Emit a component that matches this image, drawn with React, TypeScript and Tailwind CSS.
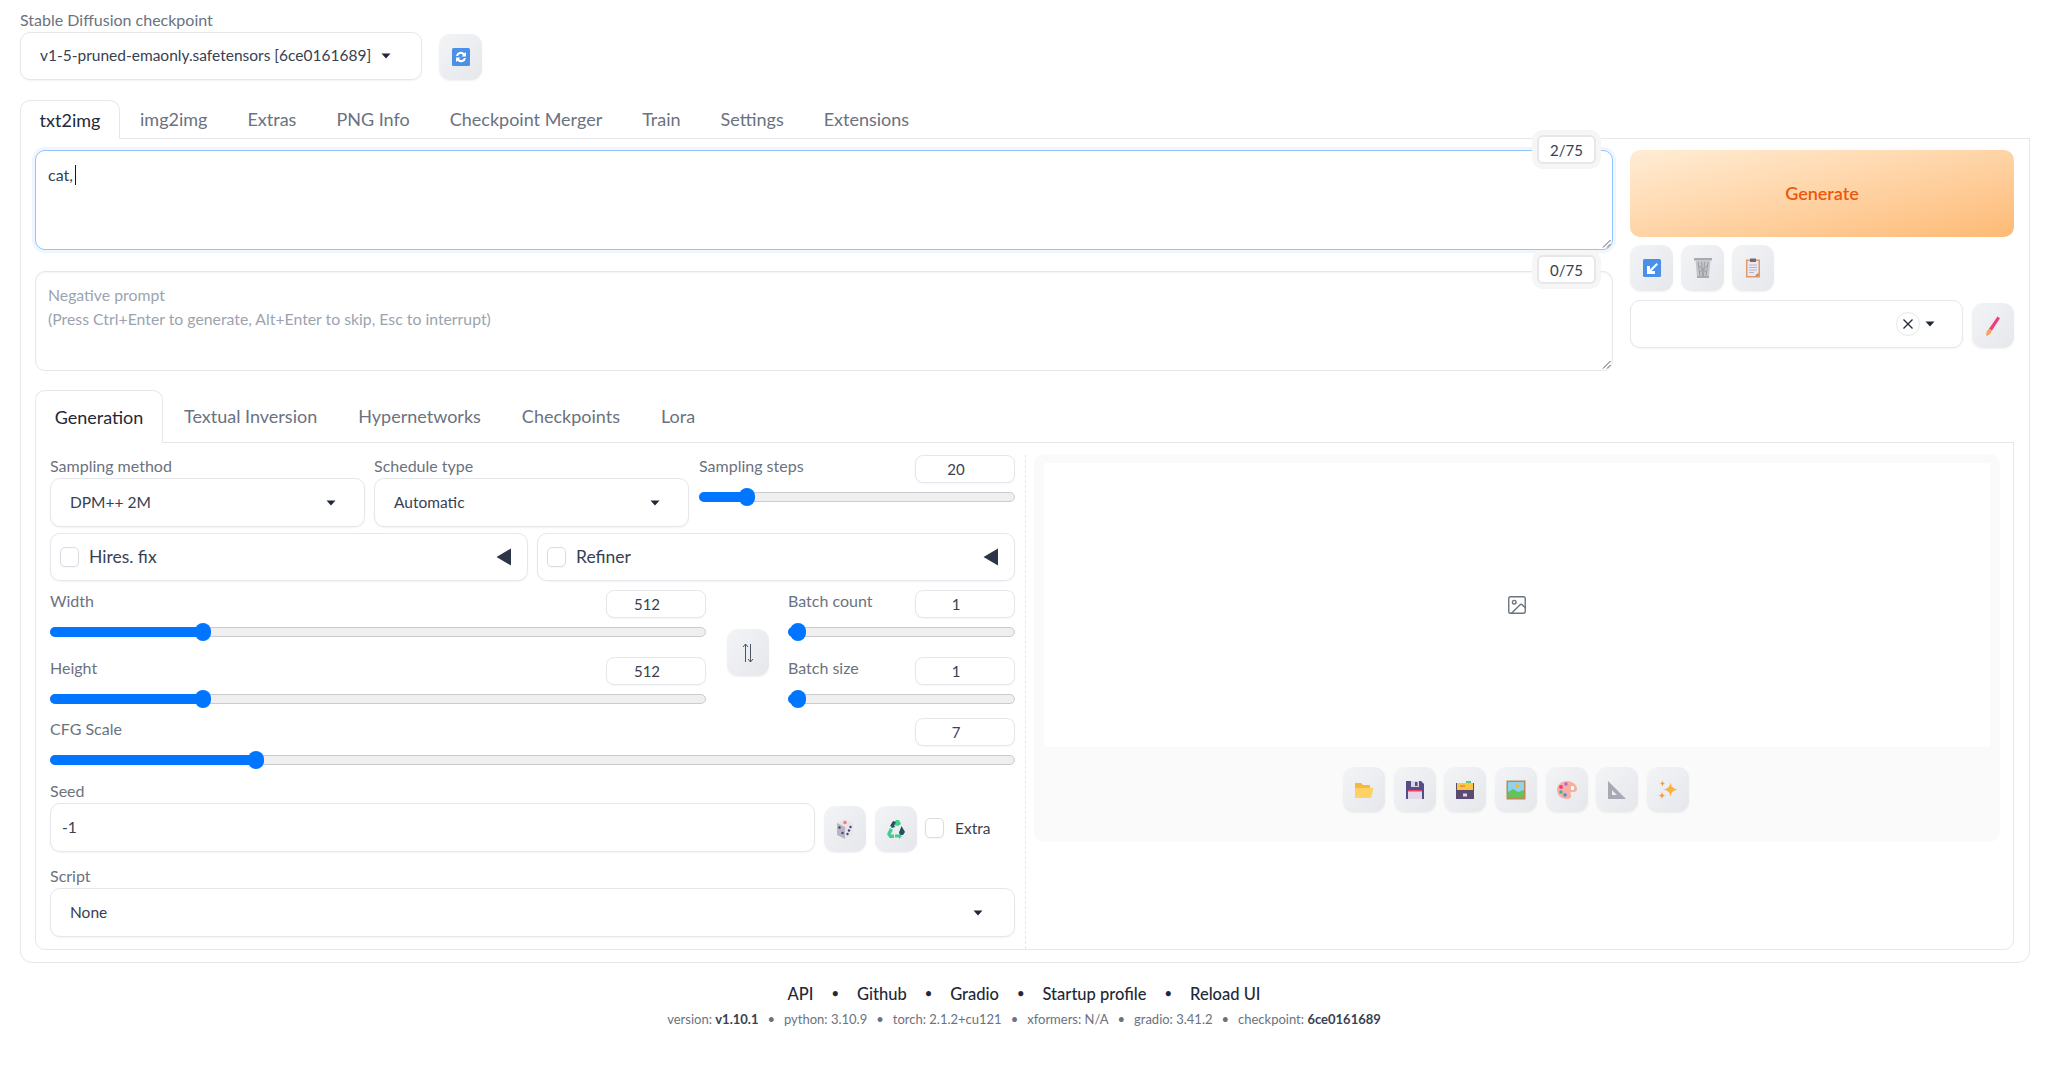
import React from "react";

const FONT = "font-['Lato','Noto_Sans',sans-serif]";

function Caret({ className = "" }: { className?: string }) {
  return (
    <svg width="10" height="6" viewBox="0 0 10 6" className={className}>
      <path d="M0.5 0.5h9L5 5.5z" fill="#1f2937" />
    </svg>
  );
}

function Field({ text, className }: { text: string; className: string }) {
  return (
    <div className={`flex items-center justify-between rounded-[10px] border border-[#e5e7eb] bg-white pl-[19px] shadow-[0_1px_2px_rgba(0,0,0,0.05)] text-[#374151] text-[15.5px] ${className}`}>
      <span>{text}</span>
    </div>
  );
}

function IconBtn({ children, className = "" }: { children: React.ReactNode; className?: string }) {
  return (
    <div className={`flex items-center justify-center rounded-[11px] bg-gradient-to-br from-[#f3f4f6] to-[#e5e7eb] shadow-[0_1px_2px_rgba(0,0,0,0.06)] shrink-0 ${className}`}>
      {children}
    </div>
  );
}

function Num({ value }: { value: string }) {
  return (
    <div className="flex h-[28px] w-[100px] items-center justify-center rounded-[8px] border border-[#e5e7eb] bg-white pr-[18px] text-[15px] text-[#374151] shadow-[0_1px_2px_rgba(0,0,0,0.04)]">
      {value}
    </div>
  );
}

function Slider({ pct }: { pct: number }) {
  return (
    <div className="relative h-[10px] w-full rounded-[5px] border border-[#c9ccd1] bg-[#efefef]">
      <div className="absolute -left-px -top-px h-[10px] rounded-l-[5px] bg-[#0075ff]" style={{ width: `${pct}%` }} />
      <div className="absolute top-[-5px] h-[18px] w-[16px] -translate-x-1/2 rounded-full bg-[#0075ff]" style={{ left: `${pct}%` }} />
    </div>
  );
}

function SliderBlock({ label, value, pct }: { label: string; value: string; pct: number }) {
  return (
    <div className="w-full">
      <div className="flex h-[28px] items-center justify-between">
        <span className="-translate-y-[3px] text-[16px] text-[#6b7280]">{label}</span>
        <Num value={value} />
      </div>
      <div className="mt-[9px]">
        <Slider pct={pct} />
      </div>
    </div>
  );
}

function Check() {
  return <div className="h-[20px] w-[19px] shrink-0 rounded-[5px] border border-[#d9dde3] bg-white shadow-[0_1px_2px_rgba(0,0,0,0.04)]" />;
}

function Accordion({ label }: { label: string }) {
  return (
    <div className="flex h-[48px] flex-1 items-center rounded-[10px] border border-[#e5e7eb] bg-white pl-[9px] pr-[15px] shadow-[0_1px_2px_rgba(0,0,0,0.05)]">
      <Check />
      <span className="ml-[10px] text-[17.5px] text-[#374151]">{label}</span>
      <svg width="16" height="18" viewBox="0 0 16 18" className="ml-auto">
        <path d="M15 0.5v17L0.5 9z" fill="#2c3648" />
      </svg>
    </div>
  );
}

function Resize() {
  return (
    <svg width="9" height="9" viewBox="0 0 9 9" className="absolute bottom-[1px] right-[1px]">
      <path d="M8.5 1L1 8.5M8.5 5L5 8.5" stroke="#555" strokeWidth="1" />
    </svg>
  );
}

function Counter({ text, className }: { text: string; className: string }) {
  return (
    <div className={`absolute right-[16px] flex h-[29px] w-[59px] items-center justify-center rounded-[6px] border-2 border-[#e5e7eb] bg-white text-[15px] text-[#374151] shadow-[0_0_0_5px_#f6f6f7] ${className}`}>
      {text}
    </div>
  );
}

const IRefresh = (
  <svg width="20" height="20" viewBox="0 0 20 20">
    <rect x="1" y="1" width="18" height="18" rx="1.5" fill="#4a90e8" />
    <path d="M5 9a5 5 0 0 1 8.500-2.800L15 5v4.500h-4.500l1.500-1.600A3 3 0 0 0 7 9zM15 11a5 5 0 0 1-8.500 2.800L5 15v-4.500h4.500L8 12.100A3 3 0 0 0 13 11z" fill="#fff" />
  </svg>
);
const IArrow = (
  <svg width="20" height="20" viewBox="0 0 20 20">
    <rect x="1" y="1" width="18" height="18" rx="1.5" fill="#4a90e8" />
    <path d="M14.500 5L8 11.500V8H5v8h8v-3H9.500L16 6.500z" fill="#fff" />
  </svg>
);
const ITrash = (
  <svg width="20" height="22" viewBox="0 0 20 22">
    <rect x="1" y="1" width="18" height="2.500" fill="#a9a9b2" />
    <path d="M2.500 3.500h15l-1.500 17H4z" fill="#c6c6cc" />
    <path d="M5 5l2 14M8.500 5l1 14M11.500 5l-1 14M15 5l-2 14M5 8l9 8M15 8l-9 8" stroke="#97979f" strokeWidth="0.900" />
    <rect x="4" y="19" width="12" height="2" fill="#a9a9b2" />
  </svg>
);
const IClip = (
  <svg width="16" height="20" viewBox="0 0 16 20">
    <rect x="1" y="1.500" width="14" height="18" fill="#dd9a6a" />
    <rect x="2.500" y="3" width="11" height="15" fill="#ece9f3" />
    <rect x="5" y="0.500" width="6" height="3.500" fill="#6f6a7a" />
    <path d="M4 7h8M4 9.500h8M4 12h8M4 14.500h5" stroke="#b6b3c6" strokeWidth="1" />
    <path d="M10 18l3.500-3.500V18z" fill="#c9803f" />
  </svg>
);
const IPencil = (
  <svg width="18" height="22" viewBox="0 0 18 22">
    <path d="M13.500 1.500L16 3.200L8 15.500L5 13.700z" fill="#ef3f78" />
    <path d="M5 13.700L8 15.500L6.500 18.500L3 21L2 20L3 16z" fill="#f3a35a" />
  </svg>
);
const ISwap = (
  <svg width="12" height="20" viewBox="0 0 12 20" fill="none" stroke="#4b5563" strokeWidth="1">
    <path d="M3.500 19V1M1 4l2.500-3L6 4M8.500 1v18M6 16l2.500 3L11 16" />
  </svg>
);
const IDice = (
  <svg width="20" height="22" viewBox="0 0 20 22">
    <path d="M10 1l8 4-8 4-8-4z" fill="#eee2e4" />
    <path d="M2 5l8 4v12l-8-4z" fill="#b9b6c4" />
    <path d="M18 5l-8 4v12l8-4z" fill="#e6e5ec" />
    <circle cx="10" cy="4.500" r="1.700" fill="#f0777f" />
    <circle cx="4.500" cy="9.500" r="1.200" fill="#45407a" />
    <circle cx="7.500" cy="15" r="1.200" fill="#45407a" />
    <circle cx="15.500" cy="9" r="1.200" fill="#45407a" />
    <circle cx="14" cy="12.500" r="1.200" fill="#45407a" />
    <circle cx="12.500" cy="16" r="1.200" fill="#45407a" />
  </svg>
);
const IRecycle = (
  <svg width="20" height="20" viewBox="0 0 20 20">
    <path d="M7 6l3-5h3l2 4-3 2z" fill="#3fd08f" />
    <path d="M7 6l2.500 2L5 9z" fill="#27505a" />
    <path d="M15.500 7l3.500 6-2 3h-3.500l-.5-2.500z" fill="#27505a" />
    <path d="M4 9l3 2-2.500 4.500H8V19H3.500L1 15z" fill="#3fd08f" />
    <path d="M9 15.500h4V14l3 3-3 3v-1.500H9z" fill="#3fd08f" />
    <path d="M7 2L4 7l3 1.500L10 3z" fill="#27505a" />
  </svg>
);
const IFolder = (
  <svg width="20" height="18" viewBox="0 0 20 18">
    <path d="M1 2h6l2 2h7v3H1z" fill="#f5b93f" />
    <path d="M1 17V7h18.500L17 17z" fill="#fed165" />
  </svg>
);
const ISave = (
  <svg width="20" height="20" viewBox="0 0 20 20">
    <path d="M1 1h15l3 3v15H1z" fill="#544d86" />
    <rect x="6" y="1" width="8" height="6" fill="#d8d2e6" />
    <rect x="10" y="2" width="2.500" height="4" fill="#544d86" />
    <rect x="3" y="10" width="14" height="9" fill="#e2d8ea" />
    <rect x="3" y="10" width="14" height="1.500" fill="#ee3f66" />
  </svg>
);
const IArchive = (
  <svg width="20" height="20" viewBox="0 0 20 20">
    <rect x="1" y="3" width="18" height="16" fill="#5b4a72" />
    <rect x="2" y="3" width="16" height="7" fill="#f9c83f" />
    <rect x="11" y="1" width="5" height="2" fill="#58c68f" />
    <rect x="5" y="5.500" width="5" height="1" fill="#e85c50" />
    <rect x="8" y="13.500" width="4" height="3" fill="#dcd7e6" />
  </svg>
);
const IPicture = (
  <svg width="20" height="20" viewBox="0 0 20 20">
    <rect x="0.500" y="0.500" width="19" height="19" fill="#b98a55" />
    <rect x="2" y="2" width="16" height="16" fill="#8fd3ee" />
    <circle cx="11" cy="6" r="2" fill="#f6b93b" />
    <path d="M2 12l5-3 5 3 6-2v8H2z" fill="#63c25b" />
  </svg>
);
const IPalette = (
  <svg width="22" height="20" viewBox="0 0 22 20">
    <path d="M11 1c6 0 10 4 10 8 0 3-3 3-5 3-2 0-2 2-1 3 1 2-1 4-4 4C5 19 1 15 1 10S5 1 11 1z" fill="#f6b0a0" />
    <rect x="15" y="6" width="3" height="4" rx="1" fill="#fff" />
    <circle cx="10" cy="4" r="1.700" fill="#b45ee0" />
    <circle cx="5" cy="7" r="1.900" fill="#ee3f7a" />
    <circle cx="5" cy="12" r="1.700" fill="#31b5a5" />
    <circle cx="9" cy="15" r="1.800" fill="#3f8fe8" />
  </svg>
);
const IRuler = (
  <svg width="20" height="20" viewBox="0 0 20 20">
    <path fillRule="evenodd" d="M1 1l18 18H1zM5 10v5h5z" fill="#a9a8b4" />
  </svg>
);
const ISpark = (
  <svg width="20" height="20" viewBox="0 0 20 20">
    <path d="M12.500 2c.7 4.800 2 6.300 7 7.500-5 1.200-6.300 2.700-7 7.500-.7-4.800-2-6.300-7-7.500 5-1.200 6.300-2.700 7-7.500z" fill="#fbb13c" />
    <path d="M4.500 0.500c.4 2.100.9 2.700 3 3.100-2.100.4-2.600 1-3 3.100-.4-2.100-.9-2.700-3-3.100 2.100-.4 2.600-1 3-3.100z" fill="#f59a3d" />
    <path d="M4 12c.5 2.500 1.100 3.100 3.500 3.500C5.100 16 4.500 16.600 4 19.200c-.5-2.600-1.100-3.200-3.500-3.700C2.900 15.100 3.500 14.500 4 12z" fill="#f59a3d" />
  </svg>
);

export default function App() {
  return (
    <div className={`h-[1066px] w-[2048px] overflow-hidden bg-white pl-[20px] pr-[18px] pt-[8px] text-[#374151] ${FONT}`}>
      {/* checkpoint */}
      <div className="h-[24px] text-[16px] leading-[24px] text-[#6b7280]">Stable Diffusion checkpoint</div>
      <div className="flex items-end gap-[17px]">
        <div className="flex h-[48px] w-[402px] items-center rounded-[10px] border border-[#e5e7eb] bg-white pl-[19px] text-[15.5px] shadow-[0_1px_2px_rgba(0,0,0,0.05)]">
          <span>v1-5-pruned-emaonly.safetensors [6ce0161689]</span>
          <Caret className="ml-[10px]" />
        </div>
        <IconBtn className="h-[46px] w-[43px]">{IRefresh}</IconBtn>
      </div>

      {/* top tabs */}
      <div className="mt-[20px] flex h-[39px] text-[18px] text-[#6b7280]">
        <div className="z-10 flex h-[39px] w-[100px] items-center justify-center rounded-t-[10px] border border-b-0 border-[#e5e7eb] bg-white text-[#1f2937]">txt2img</div>
        <div className="flex items-center gap-[40px] pl-[20px]">
          <span>img2img</span>
          <span>Extras</span>
          <span>PNG Info</span>
          <span>Checkpoint Merger</span>
          <span>Train</span>
          <span>Settings</span>
          <span>Extensions</span>
        </div>
      </div>

      <div className="-mt-px w-[2010px] rounded-b-[12px] border border-[#e5e7eb] pb-[12px] pl-[14px] pr-[15px] pt-[11px]">
        <div className="flex gap-[17px]">
          <div className="w-[1578px]">
            <div className="relative h-[100px] rounded-[10px] border border-[#93c5fd] bg-white px-[12px] pt-[10px] text-[16px] leading-[24px] shadow-[0_0_0_3px_#eff6ff]">
              <span>cat,</span>
              <span className="ml-[2px] inline-block h-[20px] w-[1.5px] translate-y-[4px] bg-[#111827]" />
              <Resize />
              <Counter text="2/75" className="top-[-16px]" />
            </div>
            <div className="relative mt-[21px] h-[100px] rounded-[10px] border border-[#e5e7eb] bg-white px-[12px] pt-[11px] text-[15.8px] leading-[24px] text-[#9ca3af] shadow-[inset_0_1px_2px_rgba(0,0,0,0.05)]">
              <div>Negative prompt</div>
              <div>(Press Ctrl+Enter to generate, Alt+Enter to skip, Esc to interrupt)</div>
              <Resize />
              <Counter text="0/75" className="top-[-17px]" />
            </div>
          </div>
          <div className="w-[384px]">
            <div className="flex h-[87px] items-center justify-center rounded-[10px] bg-gradient-to-br from-[#ffedd5] to-[#fdba74] text-[18px] font-semibold text-[#ea580c]">Generate</div>
            <div className="mt-[8px] flex gap-[8px]">
              <IconBtn className="h-[46px] w-[43px]">{IArrow}</IconBtn>
              <IconBtn className="h-[46px] w-[43px]">{ITrash}</IconBtn>
              <IconBtn className="h-[46px] w-[42px]">{IClip}</IconBtn>
            </div>
            <div className="mt-[9px] flex items-end gap-[9px]">
              <div className="flex h-[48px] w-[333px] items-center rounded-[10px] border border-[#e5e7eb] bg-white shadow-[0_1px_2px_rgba(0,0,0,0.05)]">
                <div className="ml-auto flex h-[24px] w-[24px] items-center justify-center rounded-full border border-[#e5e7eb]">
                  <svg width="12" height="12" viewBox="0 0 12 12">
                    <path d="M1.500 1.500l9 9M10.500 1.500l-9 9" stroke="#1f2937" strokeWidth="1.300" />
                  </svg>
                </div>
                <Caret className="ml-[5px] mr-[27px]" />
              </div>
              <IconBtn className="h-[45px] w-[42px]">{IPencil}</IconBtn>
            </div>
          </div>
        </div>

        {/* sub tabs */}
        <div className="mt-[19px] flex h-[53px] text-[18px] text-[#6b7280]">
          <div className="z-10 flex h-[53px] w-[128px] items-center justify-center rounded-t-[10px] border border-b-0 border-[#e5e7eb] bg-white text-[#1f2937]">Generation</div>
          <div className="flex items-center gap-[41px] pl-[21px]">
            <span>Textual Inversion</span>
            <span>Hypernetworks</span>
            <span>Checkpoints</span>
            <span>Lora</span>
          </div>
        </div>

        <div className="-mt-px flex h-[508px] rounded-b-[10px] border border-[#e5e7eb] pl-[14px] pr-[13px] pt-[12px]">
          {/* left column */}
          <div className="w-[965px] shrink-0">
            <div className="flex gap-[9px]">
              <div className="w-[315px] shrink-0">
                <div className="flex h-[21px] items-end text-[16px] leading-[20px] text-[#6b7280]">Sampling method</div>
                <div className="relative mt-[2px]">
                  <Field text="DPM++ 2M" className="h-[49px] w-full" />
                  <Caret className="absolute right-[29px] top-[22px]" />
                </div>
              </div>
              <div className="w-[315px] shrink-0">
                <div className="flex h-[21px] items-end text-[16px] leading-[20px] text-[#6b7280]">Schedule type</div>
                <div className="relative mt-[2px]">
                  <Field text="Automatic" className="h-[49px] w-full" />
                  <Caret className="absolute right-[29px] top-[22px]" />
                </div>
              </div>
              <div className="ml-[1px] w-[316px]">
                <SliderBlock label="Sampling steps" value="20" pct={15} />
              </div>
            </div>

            <div className="mt-[6px] flex gap-[9px]">
              <Accordion label="Hires. fix" />
              <Accordion label="Refiner" />
            </div>

            <div className="mt-[9px] flex">
              <div className="w-[656px] shrink-0">
                <SliderBlock label="Width" value="512" pct={23.300} />
                <div className="mt-[20px]">
                  <SliderBlock label="Height" value="512" pct={23.300} />
                </div>
              </div>
              <IconBtn className="ml-[21px] mt-[39px] h-[47px] w-[42px]">{ISwap}</IconBtn>
              <div className="ml-[19px] w-[227px] shrink-0">
                <SliderBlock label="Batch count" value="1" pct={4} />
                <div className="mt-[20px]">
                  <SliderBlock label="Batch size" value="1" pct={4} />
                </div>
              </div>
            </div>

            <div className="mt-[14px]">
              <SliderBlock label="CFG Scale" value="7" pct={21.300} />
            </div>

            <div className="mt-[14px] text-[16px] leading-[24px] text-[#6b7280]">Seed</div>
            <div className="flex items-end">
              <Field text="-1" className="h-[49px] w-[765px] !pl-[11px]" />
              <IconBtn className="ml-[9px] h-[46px] w-[42px]">{IDice}</IconBtn>
              <IconBtn className="ml-[9px] h-[46px] w-[42px]">{IRecycle}</IconBtn>
              <div className="mb-[12px] ml-[8px] flex items-center">
                <Check />
                <span className="ml-[11px] text-[15.5px]">Extra</span>
              </div>
            </div>

            <div className="mt-[12px] text-[16px] leading-[24px] text-[#6b7280]">Script</div>
            <div className="relative">
              <Field text="None" className="h-[49px] w-full" />
              <Caret className="absolute right-[32px] top-[22px]" />
            </div>
          </div>

          {/* divider */}
          <div className="ml-[10px] w-0 border-l border-dashed border-[#e5e7eb]" />

          {/* output */}
          <div className="ml-[8px] -mt-px h-[388px] w-[966px] shrink-0 rounded-[10px] bg-[#fafafa] px-[10px] pt-[9px]">
            <div className="flex h-[284px] w-[946px] items-center justify-center bg-white">
              <svg width="22" height="22" viewBox="0 0 24 24" fill="none" stroke="#6b7280" strokeWidth="1.500" strokeLinejoin="round" strokeLinecap="round">
                <rect x="3" y="3" width="18" height="18" rx="2" />
                <circle cx="9" cy="9" r="2" />
                <path d="M21 15l-3.100-3.100a2 2 0 0 0-2.800 0L6 21" />
              </svg>
            </div>
            <div className="mt-[20px] flex justify-center gap-[8.700px] pr-[2px]">
              <IconBtn className="h-[45px] w-[42px]">{IFolder}</IconBtn>
              <IconBtn className="h-[45px] w-[42px]">{ISave}</IconBtn>
              <IconBtn className="h-[45px] w-[42px]">{IArchive}</IconBtn>
              <IconBtn className="h-[45px] w-[42px]">{IPicture}</IconBtn>
              <IconBtn className="h-[45px] w-[42px]">{IPalette}</IconBtn>
              <IconBtn className="h-[45px] w-[42px]">{IRuler}</IconBtn>
              <IconBtn className="h-[45px] w-[42px]">{ISpark}</IconBtn>
            </div>
          </div>
        </div>
      </div>

      {/* footer */}
      <div className="-ml-[20px] -mr-[18px] mt-[19px] flex h-[24px] items-center justify-center gap-[18px] text-[16.5px] font-medium text-[#1f2937]">
        <span>API</span><span className="text-[13px]">•</span><span>Github</span><span className="text-[13px]">•</span><span>Gradio</span><span className="text-[13px]">•</span><span>Startup profile</span><span className="text-[13px]">•</span><span>Reload UI</span>
      </div>
      <div className="-ml-[20px] -mr-[18px] mt-[4px] flex h-[20px] items-center justify-center gap-[9px] text-[13px] text-[#6b7280]">
        <span>version: <b className="text-[#374151]">v1.10.1</b></span><span>•</span>
        <span>python: 3.10.9</span><span>•</span>
        <span>torch: 2.1.2+cu121</span><span>•</span>
        <span>xformers: N/A</span><span>•</span>
        <span>gradio: 3.41.2</span><span>•</span>
        <span>checkpoint: <b className="text-[#374151]">6ce0161689</b></span>
      </div>
    </div>
  );
}
